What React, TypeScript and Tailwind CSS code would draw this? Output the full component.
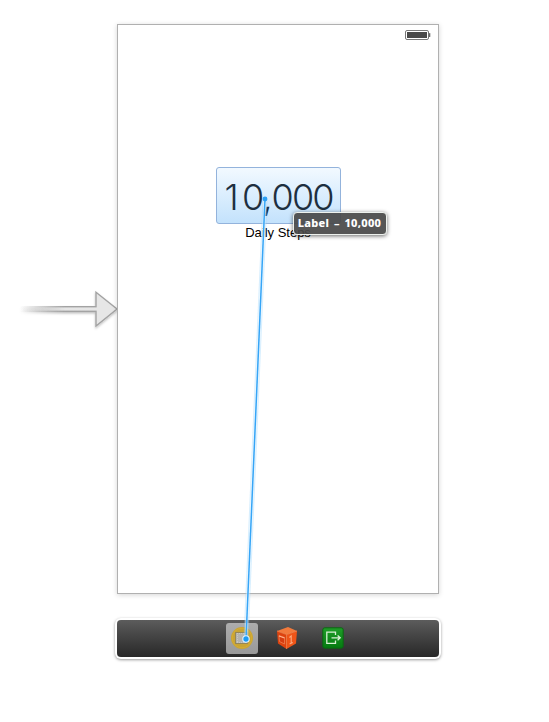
function EntryArrow() {
  return (
    <svg className="block" width="117" height="50" viewBox="0 0 117 50">
      <defs>
        <linearGradient id="shaft" x1="20" x2="65" y1="0" y2="0" gradientUnits="userSpaceOnUse">
          <stop offset="0" stopColor="#a3a3a3" stopOpacity="0" />
          <stop offset="1" stopColor="#a3a3a3" />
        </linearGradient>
        <linearGradient id="shaftFill" x1="20" x2="65" y1="0" y2="0" gradientUnits="userSpaceOnUse">
          <stop offset="0" stopColor="#e6e6e6" stopOpacity="0" />
          <stop offset="1" stopColor="#e6e6e6" />
        </linearGradient>
        <filter id="arrowShadow" x="-10%" y="-20%" width="120%" height="150%">
          <feDropShadow dx="0" dy="1.5" stdDeviation="1.2" floodColor="#000" floodOpacity="0.25" />
        </filter>
      </defs>
      <g filter="url(#arrowShadow)">
        <rect x="20" y="22" width="76" height="6" fill="url(#shaft)" />
        <path d="M96 8.2 L117 25 L96 42 Z" fill="#e6e6e6" stroke="#a3a3a3" strokeWidth="1.4" />
        <rect x="20" y="23.4" width="77" height="3.2" fill="url(#shaftFill)" />
      </g>
    </svg>
  );
}

function Battery() {
  return (
    <svg className="block" width="26" height="11" viewBox="0 0 26 11">
      <rect x="0.5" y="0.5" width="23" height="9" rx="1.5" fill="#fff" stroke="#777" />
      <rect x="2" y="2" width="20" height="6" fill="#484848" />
      <rect x="24" y="3" width="1.3" height="4" rx="0.6" fill="#666" />
    </svg>
  );
}

function ControllerIcon() {
  return (
    <svg className="block" width="24" height="24" viewBox="0 0 24 24">
      <circle cx="12" cy="12" r="11" fill="#c9a435" />
      <circle cx="12" cy="12" r="9.8" fill="none" stroke="#d5ad32" strokeWidth="1" />
      <rect x="5.5" y="6.5" width="12" height="11" fill="#b5b3ae" stroke="#94865a" />
      <path d="M7.5 7 V17" stroke="#cbc8bd" strokeDasharray="1 1" />
      <path d="M7 7.5 H17 M7 16.5 H17" stroke="#cbc8bd" strokeDasharray="1 1" />
    </svg>
  );
}

function ResponderIcon() {
  return (
    <svg className="block" width="22" height="24" viewBox="0 0 22 24">
      <path d="M1 5 L12 1 L21 5 L10.5 8.5 Z" fill="#f27a3c" />
      <path d="M1 5 L10.5 8.5 L10.5 23 L2 17.5 Z" fill="#dd430f" />
      <path d="M10.5 8.5 L21 5 L20 17.5 L10.5 23 Z" fill="#ee5518" />
      <path d="M1 5 L10.5 8.5 L21 5 M10.5 8.5 V23" fill="none" stroke="#fb8a50" strokeWidth="0.7" />
      <path d="M3 9.5 L8.5 11.5 V18 L3.5 15.5 Z" fill="#d53c10" stroke="#ec7d50" strokeWidth="0.8" />
      <path d="M3 10 L8.5 12" stroke="#ffb58e" strokeWidth="1.2" />
      <path d="M13.4 11.5 L15.2 10 V17.2 M13.6 18 L16.8 16.6" fill="none" stroke="#fbaa80" strokeWidth="1.1" />
    </svg>
  );
}

function ExitIcon() {
  return (
    <svg className="block" width="22" height="22" viewBox="0 0 22 22">
      <defs>
        <linearGradient id="exitFill" x1="0" x2="0" y1="0" y2="1">
          <stop offset="0" stopColor="#1f9d28" />
          <stop offset="1" stopColor="#047a10" />
        </linearGradient>
      </defs>
      <rect x="0.8" y="0.8" width="20.4" height="20.4" rx="2" fill="url(#exitFill)" stroke="#0b6612" />
      <path d="M13.5 8 V5.2 H4.8 V16.3 H13.5 V13.5" fill="none" stroke="#d8f0d4" strokeWidth="1.3" />
      <path d="M9.5 10.8 H18 M15.6 8.4 L18.2 10.8 L15.6 13.2" fill="none" stroke="#d8f0d4" strokeWidth="1.3" />
    </svg>
  );
}

function ConnectionLine() {
  return (
    <svg className="pointer-events-none absolute inset-0 z-20" width="549" height="722" viewBox="0 0 549 722">
      <path d="M265 199 L246 639" stroke="#8fd0fb" strokeOpacity="0.35" strokeWidth="5" />
      <path d="M265 199 L246 639" stroke="#fff" strokeOpacity="0.5" strokeWidth="3" />
      <path d="M265 199 L246 639" stroke="#35a5f7" strokeWidth="1.5" />
      <circle cx="265" cy="199" r="2.4" fill="#2ba0f6" />
      <circle cx="246" cy="639" r="3.2" fill="#1c9cf6" stroke="#e3f4ff" strokeWidth="1.1" />
    </svg>
  );
}

export default function App() {
  return (
    <main className="relative h-[722px] w-[549px] overflow-hidden bg-white pt-6 font-['Liberation_Sans',sans-serif]">
      <div className="flex items-center">
        <EntryArrow />
        <section className="flex h-[570px] w-[322px] flex-col items-center border border-[#b0b0b0] bg-white shadow-[0_1px_5px_rgba(0,0,0,0.17)]">
          <div className="flex h-[142px] w-full justify-end pt-[5px] pr-[7px]">
            <Battery />
          </div>
          <div className="relative z-10 flex h-[57px] w-[125px] items-center rounded-[3px] border border-[#93b3dc] bg-linear-to-b from-[#f2f9ff] to-[#c3e2fc] pl-[8px]">
            <span className="mt-[3px] font-[Inter,sans-serif] text-[36px] leading-[57px] font-light tracking-[-1.9px] whitespace-nowrap text-[#1d2f40]">
              <span className="tracking-[3.4px]">1</span>0<span className="tracking-[-1px]">,</span>000
            </span>
            <div className="absolute top-[44px] left-[76px] flex h-[23px] w-[94px] items-center justify-center rounded-[4px] border-[1.5px] border-[#edf1ed] bg-[#484848]/92 font-['Noto_Sans',sans-serif] text-[11px] font-extrabold tracking-[0.3px] [word-spacing:1.5px] whitespace-nowrap text-white shadow-[0_1px_4px_rgba(0,0,0,0.6)]">
              Label – 10,000
            </div>
          </div>
          <span className="text-[13px] leading-[17px] text-black">Daily Steps</span>
        </section>
      </div>
      <footer className="mt-[26px] ml-[117px] flex h-[37px] w-[322px] items-center rounded-[4px] bg-linear-to-b from-[#5c5c5c] to-[#282828] pl-[109px] shadow-[0_0_0_2px_#fff,0_1px_3px_2px_rgba(0,0,0,0.4)]">
        <div className="flex h-[31px] w-8 items-center justify-center rounded-[3px] bg-linear-to-b from-[#adadad] to-[#999999] pb-[2px]">
          <ControllerIcon />
        </div>
        <div className="-mt-[2px] ml-[18px]">
          <ResponderIcon />
        </div>
        <div className="-mt-px ml-[24px]">
          <ExitIcon />
        </div>
      </footer>
      <ConnectionLine />
    </main>
  );
}
